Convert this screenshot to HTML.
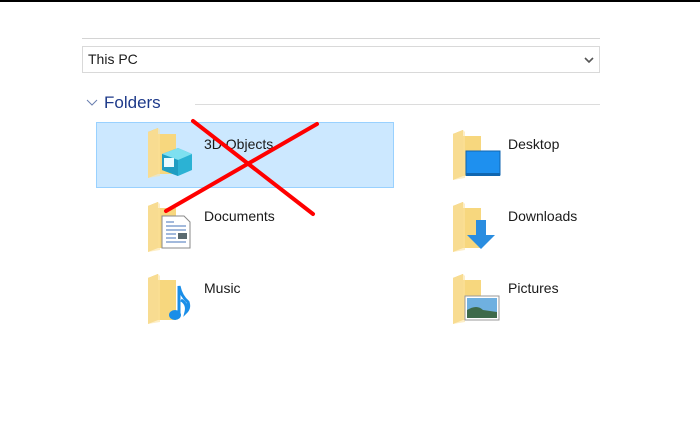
<html><head><style>
body{margin:0;width:700px;height:430px;background:#fff;position:relative;overflow:hidden;font-family:"Liberation Sans",sans-serif}
.a{position:absolute}
.t{position:absolute;font-size:14px;color:#1a1a1a}
</style></head><body>
<div class="a" style="left:0;top:0;width:700px;height:2px;background:#000"></div>
<div class="a" style="left:82px;top:38px;width:518px;height:1px;background:#d4d4d4"></div>
<div class="a" style="left:82px;top:46px;width:516px;height:25px;border:1px solid #d9d9d9"></div>
<div class="t" style="left:88px;top:51px;font-size:14px">This PC</div>
<svg class="a" style="left:583px;top:55px" width="12" height="10"><path d="M2 3 L6 7 L10 3" stroke="#555" stroke-width="1.6" fill="none"/></svg>
<svg class="a" style="left:86px;top:98px" width="14" height="10"><path d="M1 2 L6 7 L11 2" stroke="#6a7fb0" stroke-width="1" fill="none"/></svg>
<div class="t" style="left:104px;top:93px;font-size:17px;color:#1e3a8a">Folders</div>
<div class="a" style="left:195px;top:104px;width:405px;height:1px;background:#dcdcdc"></div>
<div class="a" style="left:96px;top:122px;width:296px;height:64px;background:#cce8ff;border:1px solid #99d1ff"></div>

<svg width="0" height="0" style="position:absolute"><defs>
<g id="f"><path d="M0 4 L10 0 L10 42 L0 48 Z" fill="#e8c15e"/><path d="M2 6 L28 6 L28 46 L2 46 Z" fill="#f7d77e"/><path d="M0 4 L10 0 L10 46 L0 50 Z" fill="#f3d27a"/><path d="M0 4 L10 0 L12 2 L12 48 L0 50Z" fill="#fbe3a0" opacity=".6"/></g>
</defs></svg>

<!-- 3D -->
<svg class="a" style="left:148px;top:128px" width="48" height="52"><use href="#f"/>
<path d="M14 26 L30 20 L44 26 L44 42 L30 48 L14 42Z" fill="#2bb2d4"/><path d="M14 26 L30 32 L44 26 L30 20Z" fill="#7ee0f0"/><path d="M14 26 L30 32 L30 48 L14 42Z" fill="#1e9dc2"/><rect x="16" y="30" width="10" height="9" fill="#e8fbff"/></svg>
<div class="t" style="left:204px;top:136px">3D Objects</div>
<!-- Documents -->
<svg class="a" style="left:148px;top:202px" width="48" height="52"><use href="#f"/>
<path d="M14 14 L36 14 L42 20 L42 46 L14 46Z" fill="#fff" stroke="#888"/><path d="M18 20h8M18 24h20M18 28h20M18 32h10M18 36h10M18 40h20" stroke="#6a8fc8" stroke-width="1.3"/><rect x="30" y="31" width="9" height="6" fill="#5a6a70"/></svg>
<div class="t" style="left:204px;top:208px">Documents</div>
<!-- Music -->
<svg class="a" style="left:148px;top:274px" width="48" height="52"><use href="#f"/>
<ellipse cx="27" cy="41" rx="6" ry="5" fill="#1a8ee8"/><path d="M31 41 L31 12 Q33 22 40 28 Q42 34 38 38 Q40 30 33 26" stroke="#1a8ee8" stroke-width="3" fill="none"/></svg>
<div class="t" style="left:204px;top:280px">Music</div>
<!-- Desktop -->
<svg class="a" style="left:453px;top:130px" width="48" height="52"><use href="#f"/>
<rect x="13" y="21" width="34" height="24" fill="#1e90ef" stroke="#1066b0"/><rect x="13" y="43" width="34" height="3" fill="#1066b0"/></svg>
<div class="t" style="left:508px;top:136px">Desktop</div>
<!-- Downloads -->
<svg class="a" style="left:453px;top:202px" width="48" height="52"><use href="#f"/>
<path d="M23 18 L33 18 L33 33 L42 33 L28 47 L14 33 L23 33Z" fill="#2a8de0"/></svg>
<div class="t" style="left:508px;top:208px">Downloads</div>
<!-- Pictures -->
<svg class="a" style="left:453px;top:274px" width="48" height="52"><use href="#f"/>
<rect x="12" y="22" width="34" height="24" fill="#fff" stroke="#999"/><rect x="14" y="24" width="30" height="20" fill="#6fb0e0"/><path d="M14 36 Q24 30 30 36 L44 38 L44 44 L14 44Z" fill="#3d6a4a"/></svg>
<div class="t" style="left:508px;top:280px">Pictures</div>

<svg class="a" style="left:0;top:0" width="700" height="430"><path d="M193 121 L313 214 M317 124 L166 211" stroke="#f00" stroke-width="4" stroke-linecap="round"/></svg>
</body></html>
